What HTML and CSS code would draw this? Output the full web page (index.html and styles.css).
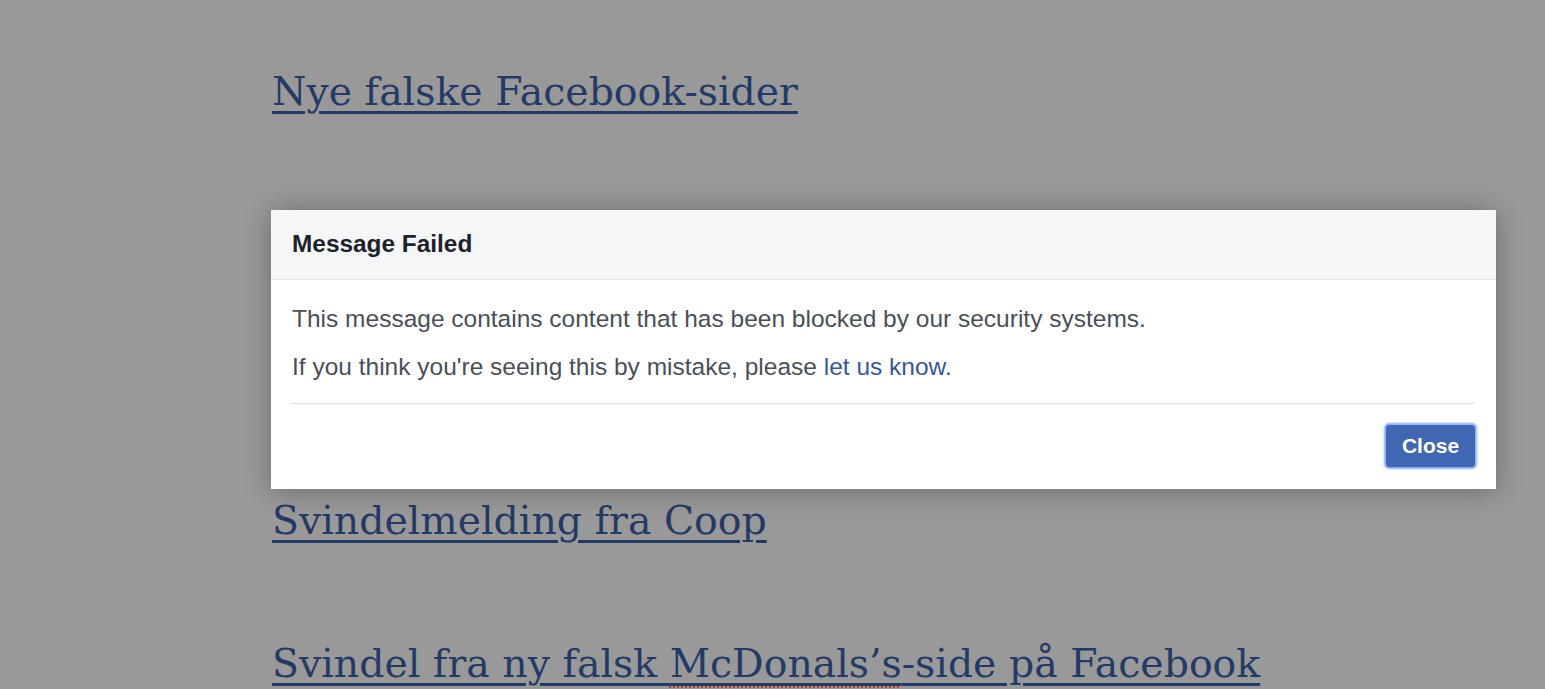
FILE: index.html
```html
<!DOCTYPE html>
<html lang="nb">
<head>
    <meta charset="UTF-8">
    <title>Svindel</title>
    <link rel="stylesheet" href="styles.css">
</head>
<body>
<div class="posts">
    <h2 class="post"><a href="#">Nye falske Facebook-sider</a></h2>
    <h2 class="post hidden"><a href="#">Falsk konkurranse</a></h2>
    <h2 class="post hidden"><a href="#">Falsk gavekort</a></h2>
    <h2 class="post"><a href="#">Svindelmelding fra Coop</a></h2>
    <h2 class="post"><a href="#">Svindel fra ny falsk <span class="typo">McDonals’s</span>-side på Facebook</a></h2>
</div>

<div class="dialog">
    <div class="dialog-head">Message Failed</div>
    <div class="dialog-body">
        <p>This message contains content that has been blocked by our security systems.</p>
        <p>If you think you're seeing this by mistake, please <a href="#">let us know</a>.</p>
    </div>
    <div class="dialog-foot">
        <button type="button">Close</button>
    </div>
</div>
</body>
</html>
```

FILE: styles.css
```css
body {
    margin: 0;
    background-color: #999999;
    overflow: hidden;
}
.posts {
    padding: 0 0 0 272px;
}
.post {
    margin: 0;
    height: 143px;
    font-family: "DejaVu Serif", Georgia, serif;
    font-weight: normal;
    font-size: 39.4px;
    line-height: 143px;
    position: relative;
    top: 20px;
}
.post a {
    color: #243a66;
    text-decoration-thickness: 3px;
    text-underline-offset: 6px;
}
.hidden {
    visibility: hidden;
}
.typo {
    text-decoration: underline dotted #c0392b;
    text-decoration-thickness: 2px;
    text-underline-offset: 9px;
}
.dialog {
    position: absolute;
    left: 271px;
    top: 210px;
    width: 1225px;
    background: #ffffff;
    box-shadow: 0 2px 26px rgba(0, 0, 0, 0.3);
    font-family: "Liberation Sans", Arial, sans-serif;
}
.dialog-head {
    background: #f5f6f7;
    border-bottom: 1px solid #e5e5e5;
    height: 69px;
    line-height: 68px;
    padding: 0 21px;
    font-size: 24.4px;
    font-weight: bold;
    color: #1d2129;
}
.dialog-body {
    margin: 0 21px;
    padding: 15px 0 12px;
    border-bottom: 1px solid #dddfe2;
    color: #4b4f56;
    font-size: 24.5px;
}
.dialog-body p {
    margin: 0;
    line-height: 48px;
}
.dialog-body a {
    color: #365899;
    text-decoration: none;
}
.dialog-foot {
    display: flex;
    justify-content: flex-end;
    padding: 21px 21px 22px;
}
.dialog-foot button {
    background-color: #4267b2;
    color: white;
    border: 1px solid #4267b2;
    border-radius: 3px;
    font-family: "Liberation Sans", Arial, sans-serif;
    font-weight: bold;
    font-size: 21px;
    height: 42px;
    width: 89px;
    padding: 0;
    box-shadow: 0 0 2px 2px rgba(88, 144, 255, .7), 0 1px 1px rgba(0, 0, 0, .15);
    cursor: pointer;
}
```
